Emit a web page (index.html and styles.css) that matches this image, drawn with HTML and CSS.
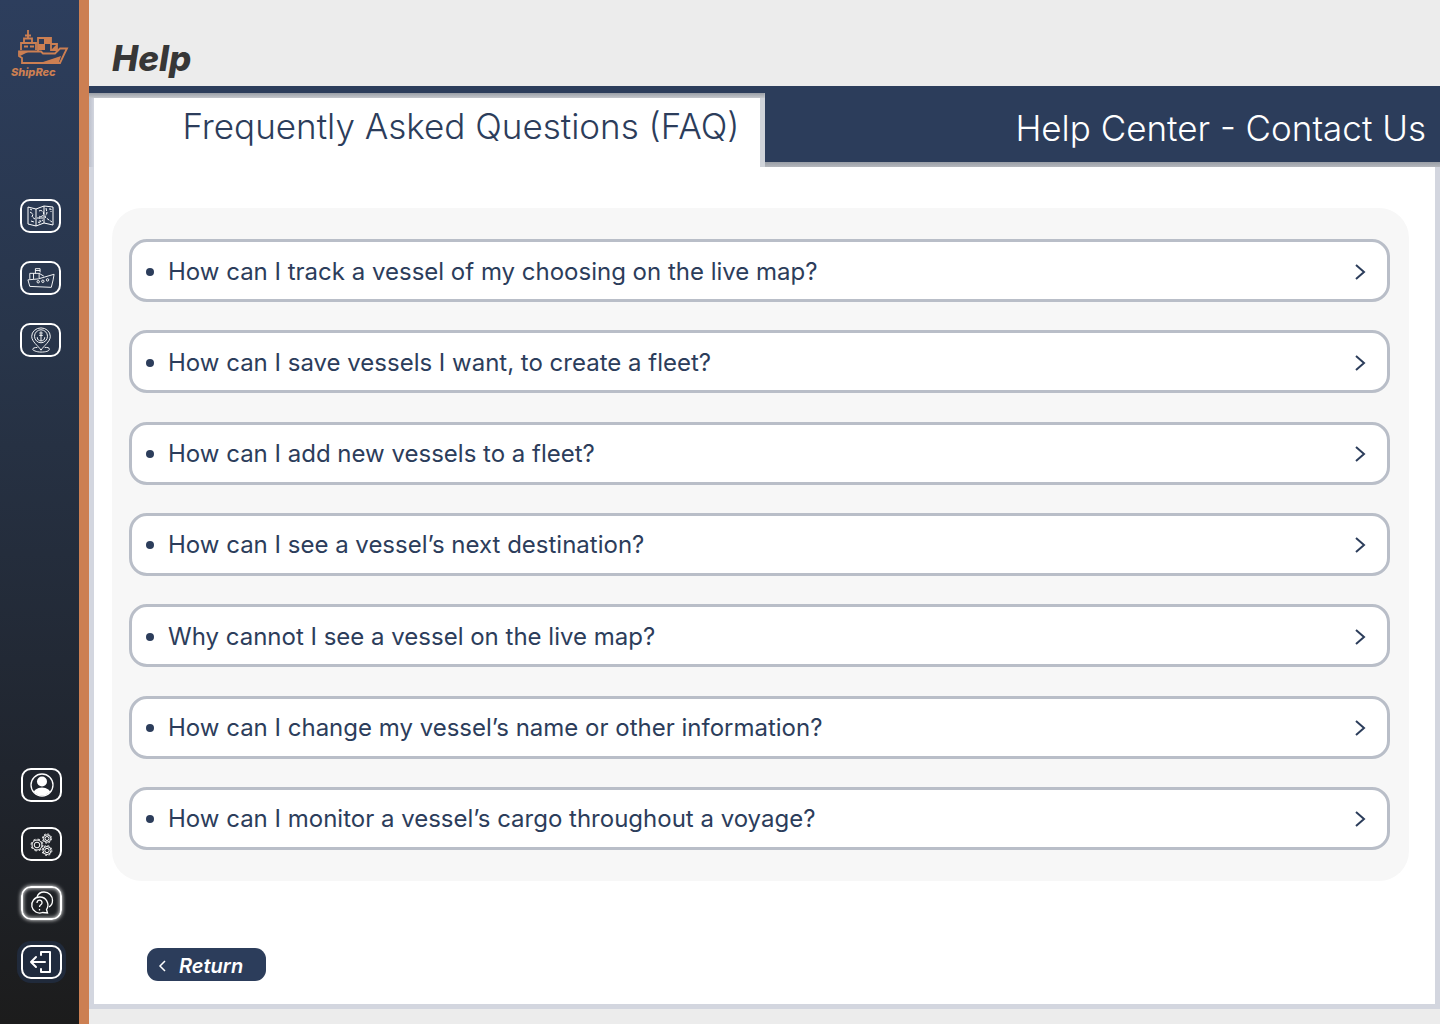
FILE: index.html
```html
<!DOCTYPE html>
<html lang="en">
<head>
<meta charset="utf-8">
<meta name="viewport" content="width=device-width, initial-scale=1">
<title>ShipRec - Help</title>
<link rel="stylesheet" href="styles.css">
</head>
<body>
<div class="app">
  <aside class="sidebar">
    <a class="logo" href="#home">
      <svg class="logo-ship" viewBox="0 0 52 36" aria-hidden="true">
        <path d="M2 21.500h22l2 2h12l5-5h7l-3 6-4 8.500H5V28l-3-2z" fill="none" stroke="currentColor" stroke-width="1.800"/>
        <path d="M44 26l-2 6H26zM2 21l9 1-8 4z" fill="currentColor"/>
        <path d="M4 20v-7h15v7M7 13V8.500h8V13M11 9V0M8 5.500h6M7 16.500h4M13 16.500h4" fill="none" stroke="currentColor" stroke-width="1.800"/>
        <path d="M21 21V8h13v13M34 14h6v6h-6z" fill="none" stroke="currentColor" stroke-width="1.800"/>
        <path d="M21 14h7v6h-7zM27 8h7v6h-7zM34 20l6-6v6z" fill="currentColor"/>
      </svg>
      <span class="logo-name">ShipRec</span>
    </a>
    <nav class="nav nav-main" aria-label="Main">
      <button class="nav-button" type="button" aria-label="Live map">
        <svg viewBox="0 0 28 24" class="icon thin">
          <path d="M1 3l8 2 8-3 9 1v18l-9-2-8 3-8-2zM9 5v17M17 2v17"/>
          <path d="M3 8l3 2-1 3 3 2M4 17l3 1M12 7a3 3 0 1 1 0 5M10 14h6M13 12v6l3-2M19 4l1 5-2 4 4 3 3 2M22 5h2v3M11 18l2 1M3 5l2 1" stroke-dasharray="3 1"/>
        </svg>
      </button>
      <button class="nav-button" type="button" aria-label="Vessels">
        <svg viewBox="0 0 30 24" class="icon thin">
          <path d="M1 14l11-1 17-5-1 6-2 8-23-1zM3 13V7h10v5M7 7v6M9 7V2h5v4M9 4h5M13 7l5 3"/>
          <circle cx="12" cy="16" r="1.300"/><circle cx="17" cy="15.500" r="1.300"/><circle cx="22" cy="14" r="1.300"/>
        </svg>
      </button>
      <button class="nav-button" type="button" aria-label="Ports">
        <svg viewBox="0 0 24 28" class="icon thin tall">
          <path d="M12 25C9 20 2 16 2 10a10 9 0 0 1 20 0c0 6-7 10-10 15z"/>
          <circle cx="12" cy="10" r="7"/><circle cx="12" cy="6.500" r="1.200"/>
          <path d="M12 8v7M10 9h4M8 11c0 3 2 4 4 4s4-1 4-4M8 22c-3 0-5 1-5 2s4 3 9 3 9-1 9-3-2-2-5-2"/>
        </svg>
      </button>
    </nav>
    <nav class="nav nav-account" aria-label="Account">
      <button class="nav-button" type="button" aria-label="Profile">
        <svg viewBox="0 0 24 24" class="icon">
          <defs><clipPath id="disc"><circle cx="12" cy="12" r="10.500"/></clipPath></defs>
          <circle cx="12" cy="12" r="11"/>
          <g clip-path="url(#disc)" fill="#fff" stroke="none"><circle cx="12" cy="8.500" r="5"/><ellipse cx="12" cy="21" rx="9" ry="6.500"/></g>
        </svg>
      </button>
      <button class="nav-button" type="button" aria-label="Settings">
        <svg viewBox="0 0 24 24" class="icon thin">
          <circle cx="7" cy="13" r="2.800"/><circle cx="7" cy="13" r="5"/><circle cx="7" cy="13" r="5.900" stroke-dasharray="2.300 2.330"/>
          <circle cx="17" cy="6.500" r="2"/><circle cx="17" cy="6.500" r="3.700"/><circle cx="17" cy="6.500" r="4.600" stroke-dasharray="1.800 1.810"/>
          <circle cx="17" cy="18.500" r="2.200"/><circle cx="17" cy="18.500" r="4"/><circle cx="17" cy="18.500" r="4.900" stroke-dasharray="1.900 1.950"/>
        </svg>
      </button>
      <button class="nav-button current" type="button" aria-label="Help" aria-current="page">
        <svg viewBox="0 0 24 24" class="icon">
          <path d="M7 6C8 3 11 1 14 1c5 0 8.500 4 8.500 8.500 0 3-1 5-3.500 6.500"/>
          <path d="M9.500 6a8 8 0 1 0 3 15.500l5 .5-1-3.500A8 8 0 0 0 9.500 6z"/>
          <path d="M7 12c0-4 5.500-3.500 5 0-.3 2-2.500 1.500-2.500 4M9.500 18v1.500"/>
        </svg>
      </button>
      <button class="nav-button log-out" type="button" aria-label="Log out">
        <svg viewBox="0 0 24 24" class="icon bold"><path d="M11 5V2h9v20h-9v-3M1 12h14M6 7l-5 5 5 5"/></svg>
      </button>
    </nav>
  </aside>

  <div class="page">
    <header class="page-header"><h1 class="page-title">Help</h1></header>
    <div class="tabs" role="tablist">
      <button class="tab tab-active" type="button" role="tab" id="tab-faq" aria-selected="true" aria-controls="faq">Frequently Asked Questions (FAQ)</button>
      <button class="tab tab-contact" type="button" role="tab" aria-selected="false">Help Center - Contact Us</button>
    </div>
    <main class="content" id="faq" role="tabpanel" aria-labelledby="tab-faq">
      <ul class="faq">
        <li><button class="question" type="button"><span>How can I track a vessel of my choosing on the live map?</span><svg class="chevron" viewBox="0 0 12 18"><path d="M1 2l8 7-8 7"/></svg></button></li>
        <li><button class="question" type="button"><span>How can I save vessels I want, to create a fleet?</span><svg class="chevron" viewBox="0 0 12 18"><path d="M1 2l8 7-8 7"/></svg></button></li>
        <li><button class="question" type="button"><span>How can I add new vessels to a fleet?</span><svg class="chevron" viewBox="0 0 12 18"><path d="M1 2l8 7-8 7"/></svg></button></li>
        <li><button class="question" type="button"><span>How can I see a vessel’s next destination?</span><svg class="chevron" viewBox="0 0 12 18"><path d="M1 2l8 7-8 7"/></svg></button></li>
        <li><button class="question" type="button"><span>Why cannot I see a vessel on the live map?</span><svg class="chevron" viewBox="0 0 12 18"><path d="M1 2l8 7-8 7"/></svg></button></li>
        <li><button class="question" type="button"><span>How can I change my vessel’s name or other information?</span><svg class="chevron" viewBox="0 0 12 18"><path d="M1 2l8 7-8 7"/></svg></button></li>
        <li><button class="question" type="button"><span>How can I monitor a vessel’s cargo throughout a voyage?</span><svg class="chevron" viewBox="0 0 12 18"><path d="M1 2l8 7-8 7"/></svg></button></li>
      </ul>
      <button class="return" type="button"><svg class="back" viewBox="0 0 8 12"><path d="M7 1L2 6l5 5"/></svg>Return</button>
    </main>
  </div>
</div>
</body>
</html>
```
FILE: styles.css
```css
:root {
  --navy: #2c3d5b;
  --copper: #cc7f52;
  --edge: #d3d6df;
}

* {
  box-sizing: border-box;
}

body {
  margin: 0;
  background: #ececec;
  color: var(--navy);
  font-family: Inter, "Liberation Sans", sans-serif;
}

button {
  margin: 0;
  font: inherit;
  color: inherit;
  cursor: pointer;
}

.app {
  display: flex;
  min-height: 100vh;
}

/* Sidebar */
.sidebar {
  flex: none;
  display: flex;
  flex-direction: column;
  width: 89px;
  padding: 30px 0 45px;
  border-right: 10px solid var(--copper);
  background: linear-gradient(#2d3e5d, #28354a 33%, #20252e 75%, #1c1c1c);
}

.logo {
  display: flex;
  flex-direction: column;
  height: 48px;
  padding-left: 11px;
  color: var(--copper);
  text-decoration: none;
}

.logo-ship {
  width: 52px;
  height: 36px;
  margin-left: 6px;
}

.logo-name {
  font-size: 11px;
  line-height: 12px;
  font-weight: 800;
  font-style: italic;
}

.nav {
  display: flex;
  flex-direction: column;
  padding-left: 20px;
}

.nav-main {
  gap: 28px;
  margin-top: 121px;
}

.nav-account {
  gap: 25px;
  margin-top: auto;
  padding-left: 21px;
}

.nav-button {
  display: flex;
  align-items: center;
  justify-content: center;
  width: 41px;
  height: 34px;
  padding: 0;
  border: 2px solid #fff;
  border-radius: 10px;
  background: none;
}

.current {
  box-shadow: 0 0 4px #fff, inset 0 0 4px #fff;
}

.log-out {
  background: #202b3e;
  box-shadow: 0 0 0 4px #202a3b;
}

.icon {
  width: 28px;
  height: 24px;
  fill: none;
  stroke: #fff;
  stroke-width: 1.3;
}

.thin {
  stroke-width: 1;
}

.tall {
  height: 26px;
}

.bold {
  stroke-width: 2;
  stroke-linecap: round;
  stroke-linejoin: round;
}

/* Page */
.page {
  flex: 1;
  display: flex;
  flex-direction: column;
  min-width: 0;
  padding-bottom: 15px;
}

.page-header {
  padding: 36px 23px 6px;
}

.page-title {
  margin: 0;
  color: #373737;
  font-size: 35px;
  line-height: 44px;
  font-weight: 800;
  font-style: italic;
}

.tabs {
  display: grid;
  grid-template-columns: 1fr 1fr;
  background: #fff;
}

.tab {
  border: 0;
  font-size: 35px;
  line-height: 44px;
  font-weight: 300;
  text-align: right;
  white-space: nowrap;
}

.tab-active {
  padding: 11px 25px 19px 5px;
  border-top: 7px solid var(--navy);
  background:
    linear-gradient(#999ea6, #c4c7cc) top / 100% 5px no-repeat,
    linear-gradient(90deg, #bcc0cc, var(--edge)) left / 5px 100% no-repeat,
    linear-gradient(#d0d4da, #d0d4da) right / 5px 100% no-repeat,
    #fff;
}

.tab-contact {
  padding: 20px 14px 17px;
  background:
    linear-gradient(#999ea6, #b4b7bd) bottom / 100% 5px no-repeat,
    var(--navy);
  color: #fff;
}

.content {
  flex: 1;
  padding: 41px 26px 23px 18px;
  border: 5px solid var(--edge);
  border-top: 0;
  background: #fff;
}

.faq {
  display: flex;
  flex-direction: column;
  justify-content: space-between;
  min-height: 673px;
  margin: 0;
  padding: 31px 19px 31px 17px;
  border-radius: 30px;
  background: #f7f7f7;
  list-style: none;
}

.question {
  display: flex;
  align-items: center;
  width: 100%;
  min-height: 63px;
  padding: 2px 20px 0 14px;
  border: 3px solid #b9bec8;
  border-radius: 18px;
  background: #fff;
  font-size: 24px;
  line-height: 30px;
  text-align: left;
}

.question::before {
  content: "";
  flex: none;
  width: 8px;
  height: 8px;
  margin-right: 14px;
  border-radius: 50%;
  background: var(--navy);
}

.chevron {
  flex: none;
  width: 12px;
  height: 18px;
  margin-left: auto;
  fill: none;
  stroke: var(--navy);
  stroke-width: 2;
}

.return {
  display: flex;
  align-items: center;
  gap: 13px;
  width: 119px;
  height: 33px;
  margin: 67px 0 0 35px;
  padding: 2px 11px 0;
  border: 0;
  border-radius: 11px;
  background: var(--navy);
  color: #fff;
  font-size: 20px;
  line-height: 24px;
  font-weight: 600;
  font-style: italic;
}

.back {
  width: 8px;
  height: 12px;
  fill: none;
  stroke: #fff;
  stroke-width: 1.5;
}
```
